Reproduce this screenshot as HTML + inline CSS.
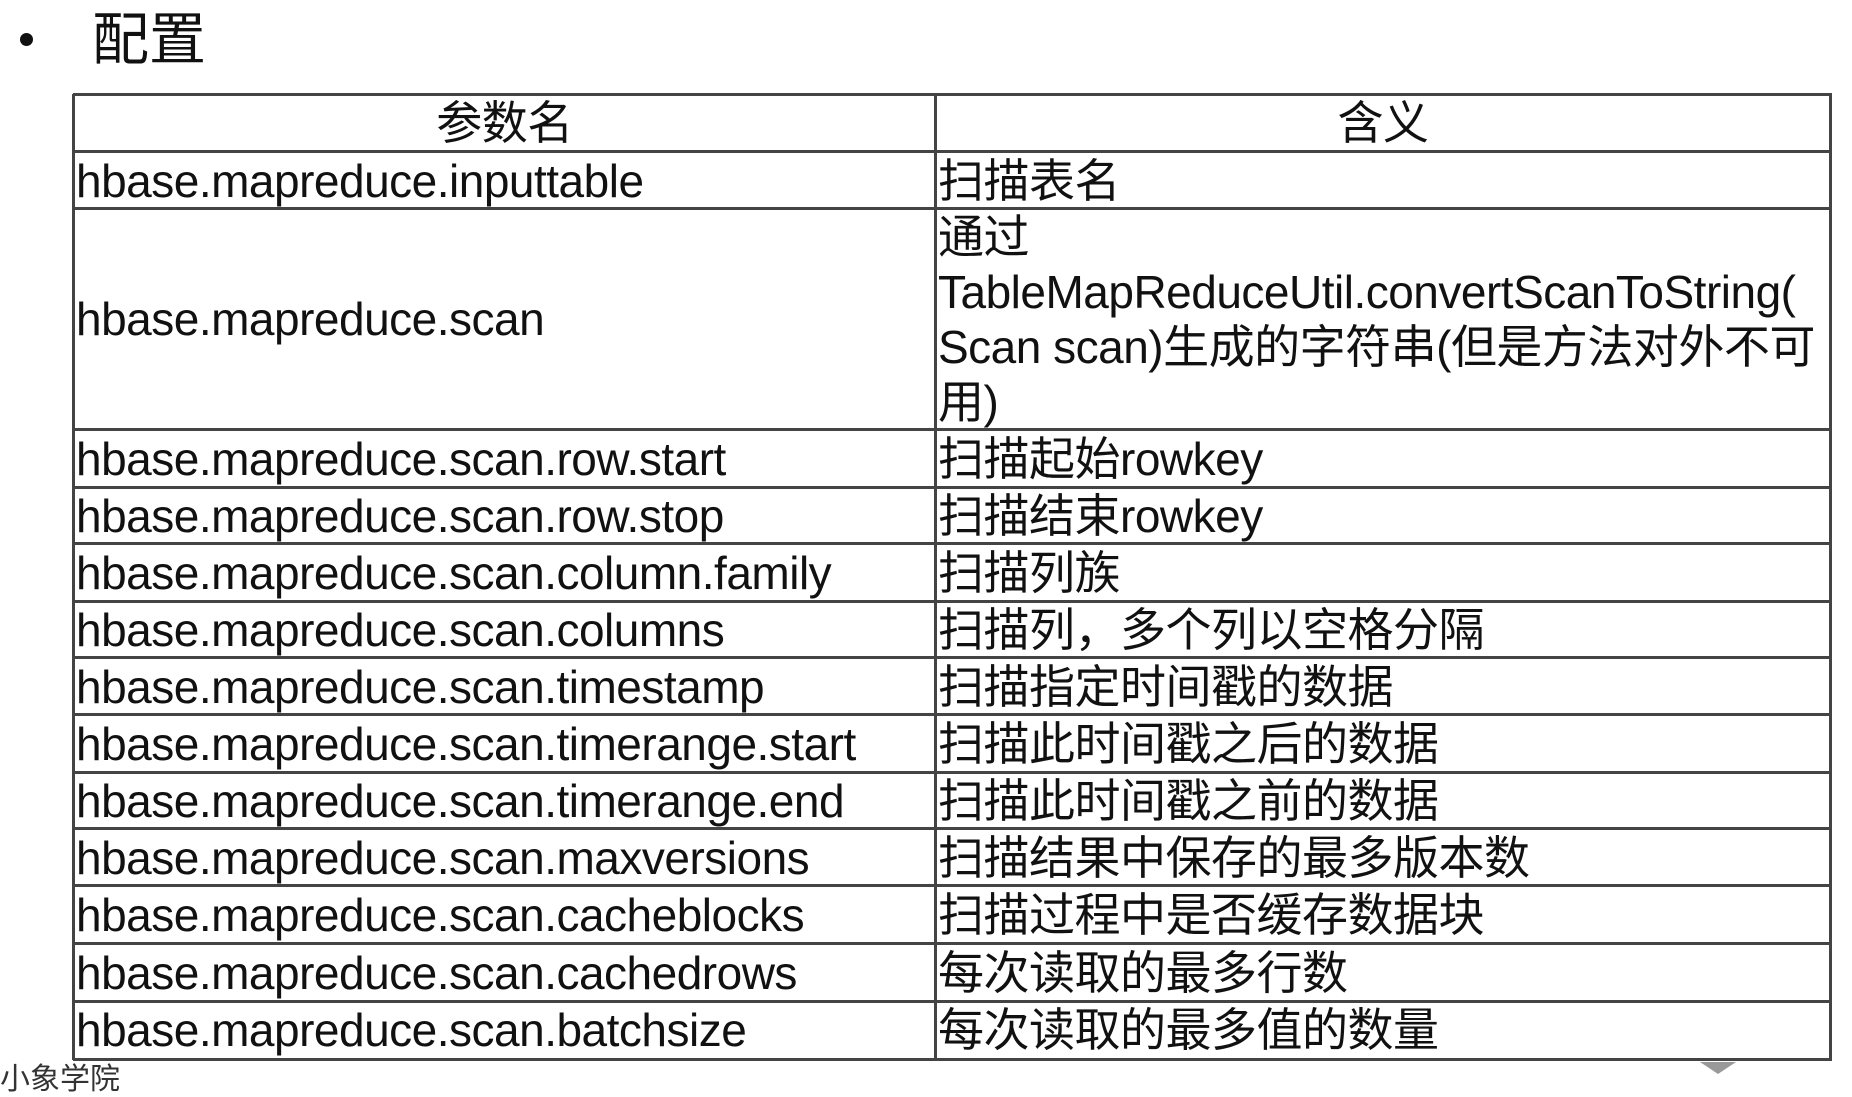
<!DOCTYPE html>
<html><head><meta charset="utf-8"><style>
html,body{margin:0;padding:0;background:#fff;}
body{width:1852px;height:1072px;position:relative;overflow:hidden;font-family:"Liberation Sans","Noto Sans CJK SC",sans-serif;color:#111;}
.h{position:absolute;left:73px;width:1759px;height:3px;background:#444;}
.v{position:absolute;top:94px;height:966px;width:3px;background:#444;}
.t{position:absolute;font-size:46px;line-height:57px;white-space:nowrap;letter-spacing:-0.5px;}
.l{left:76px;}
.r{left:938px;}
</style></head><body>
<div style="position:absolute;left:20px;top:33px;width:13px;height:13px;border-radius:50%;background:#111"></div>
<div style="position:absolute;left:92px;top:10px;font-size:57px;line-height:60px;">配置</div>

<div class="h" style="top:93px"></div>
<div class="h" style="top:150px"></div>
<div class="h" style="top:207px"></div>
<div class="h" style="top:428px"></div>
<div class="h" style="top:486px"></div>
<div class="h" style="top:542px"></div>
<div class="h" style="top:600px"></div>
<div class="h" style="top:656px"></div>
<div class="h" style="top:713px"></div>
<div class="h" style="top:771px"></div>
<div class="h" style="top:827px"></div>
<div class="h" style="top:884px"></div>
<div class="h" style="top:942px"></div>
<div class="h" style="top:1000px"></div>
<div class="h" style="top:1058px"></div>
<div class="v" style="left:72px"></div>
<div class="v" style="left:934px"></div>
<div class="v" style="left:1829px"></div>

<div class="t" style="left:75px;width:859px;text-align:center;top:95px">参数名</div>
<div class="t" style="left:937px;width:892px;text-align:center;top:95px">含义</div>

<div class="t l" style="top:153px">hbase.mapreduce.inputtable</div><div class="t r" style="top:153px">扫描表名</div>
<div class="t l" style="top:291px">hbase.mapreduce.scan</div>
<div class="t r" style="top:210px;line-height:55px">通过<br>TableMapReduceUtil.convertScanToString(<br>Scan scan)生成的字符串(但是方法对外不可<br>用)</div>
<div class="t l" style="top:431px">hbase.mapreduce.scan.row.start</div><div class="t r" style="top:431px">扫描起始rowkey</div>
<div class="t l" style="top:488px">hbase.mapreduce.scan.row.stop</div><div class="t r" style="top:488px">扫描结束rowkey</div>
<div class="t l" style="top:545px">hbase.mapreduce.scan.column.family</div><div class="t r" style="top:545px">扫描列族</div>
<div class="t l" style="top:602px">hbase.mapreduce.scan.columns</div><div class="t r" style="top:602px">扫描列，多个列以空格分隔</div>
<div class="t l" style="top:659px">hbase.mapreduce.scan.timestamp</div><div class="t r" style="top:659px">扫描指定时间戳的数据</div>
<div class="t l" style="top:716px">hbase.mapreduce.scan.timerange.start</div><div class="t r" style="top:716px">扫描此时间戳之后的数据</div>
<div class="t l" style="top:773px">hbase.mapreduce.scan.timerange.end</div><div class="t r" style="top:773px">扫描此时间戳之前的数据</div>
<div class="t l" style="top:830px">hbase.mapreduce.scan.maxversions</div><div class="t r" style="top:830px">扫描结果中保存的最多版本数</div>
<div class="t l" style="top:887px">hbase.mapreduce.scan.cacheblocks</div><div class="t r" style="top:887px">扫描过程中是否缓存数据块</div>
<div class="t l" style="top:945px">hbase.mapreduce.scan.cachedrows</div><div class="t r" style="top:945px">每次读取的最多行数</div>
<div class="t l" style="top:1002px">hbase.mapreduce.scan.batchsize</div><div class="t r" style="top:1002px">每次读取的最多值的数量</div>

<div style="position:absolute;left:0;top:1063px;font-size:30px;line-height:34px;color:#333">小象学院</div>
<div style="position:absolute;left:1700px;top:1062px;width:0;height:0;border-left:18px solid transparent;border-right:18px solid transparent;border-top:12px solid #999"></div>
</body></html>
